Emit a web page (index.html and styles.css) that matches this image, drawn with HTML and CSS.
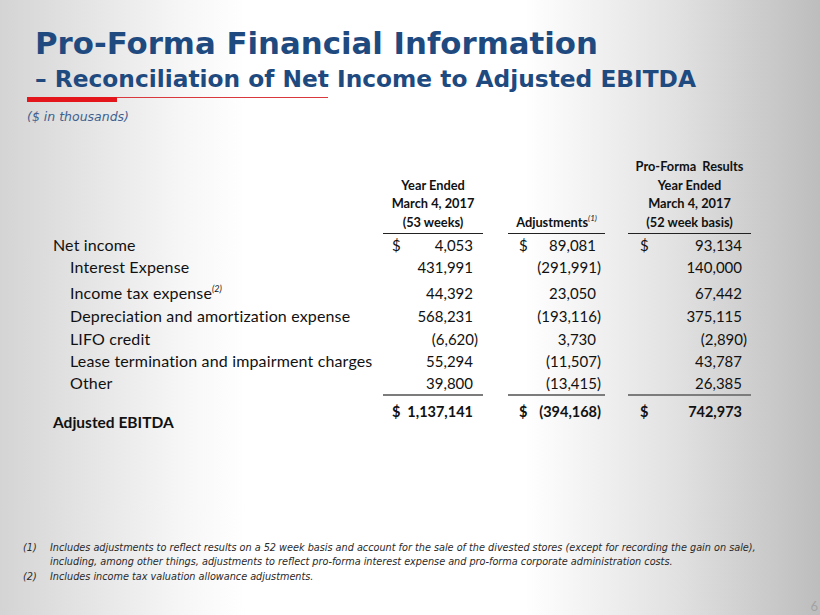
FILE: index.html
```html
<!DOCTYPE html>
<html>
<head>
<meta charset="utf-8">
<link rel="stylesheet" href="styles.css">
</head>
<body>
<div class="slide">
  <header class="head">
    <h1 class="title">Pro-Forma Financial Information</h1>
    <h2 class="subtitle">– Reconciliation of Net Income to Adjusted EBITDA</h2>
    <div class="rule"><span class="rule-thick"></span><span class="rule-thin"></span></div>
    <div class="units">($ in thousands)</div>
  </header>

  <main class="body">
    <table class="fin">
      <colgroup>
        <col class="c-label"><col class="c-v1"><col class="c-gap1"><col class="c-v2"><col class="c-gap2"><col class="c-v3">
      </colgroup>
      <thead>
        <tr class="hdr">
          <th></th>
          <th class="hv"><div>Year Ended</div><div>March 4, 2017</div><div>(53 weeks)</div></th>
          <th></th>
          <th class="hv"><div>Adjustments<sup class="hsup">(1)</sup></div></th>
          <th></th>
          <th class="hv"><div>Pro-Forma&nbsp; Results</div><div>Year Ended</div><div>March 4, 2017</div><div>(52 week basis)</div></th>
        </tr>
      </thead>
      <tbody>
        <tr class="r r1">
          <td class="lbl">Net income</td>
          <td class="v v1"><span class="cur">$</span><span class="n">4,053</span></td><td></td>
          <td class="v v2"><span class="cur">$</span><span class="n">89,081</span></td><td></td>
          <td class="v v3"><span class="cur">$</span><span class="n">93,134</span></td>
        </tr>
        <tr class="r r2">
          <td class="lbl ind">Interest Expense</td>
          <td class="v v1"><span class="n">431,991</span></td><td></td>
          <td class="v v2"><span class="n">(291,991<span class="rp">)</span></span></td><td></td>
          <td class="v v3"><span class="n">140,000</span></td>
        </tr>
        <tr class="r r3">
          <td class="lbl ind">Income tax expense<sup class="lsup">(2)</sup></td>
          <td class="v v1"><span class="n">44,392</span></td><td></td>
          <td class="v v2"><span class="n">23,050</span></td><td></td>
          <td class="v v3"><span class="n">67,442</span></td>
        </tr>
        <tr class="r r4">
          <td class="lbl ind">Depreciation and amortization expense</td>
          <td class="v v1"><span class="n">568,231</span></td><td></td>
          <td class="v v2"><span class="n">(193,116<span class="rp">)</span></span></td><td></td>
          <td class="v v3"><span class="n">375,115</span></td>
        </tr>
        <tr class="r r5">
          <td class="lbl ind">LIFO credit</td>
          <td class="v v1"><span class="n">(6,620<span class="rp">)</span></span></td><td></td>
          <td class="v v2"><span class="n">3,730</span></td><td></td>
          <td class="v v3"><span class="n">(2,890<span class="rp">)</span></span></td>
        </tr>
        <tr class="r r6">
          <td class="lbl ind">Lease termination and impairment charges</td>
          <td class="v v1"><span class="n">55,294</span></td><td></td>
          <td class="v v2"><span class="n">(11,507<span class="rp">)</span></span></td><td></td>
          <td class="v v3"><span class="n">43,787</span></td>
        </tr>
        <tr class="r r7">
          <td class="lbl ind">Other</td>
          <td class="v v1 sub"><span class="n">39,800</span></td><td></td>
          <td class="v v2 sub"><span class="n">(13,415<span class="rp">)</span></span></td><td></td>
          <td class="v v3 sub"><span class="n">26,385</span></td>
        </tr>
        <tr class="tot">
          <td class="lbl tlbl">Adjusted EBITDA</td>
          <td class="v v1 tv"><span class="cur">$</span><span class="n">1,137,141</span></td><td></td>
          <td class="v v2 tv"><span class="cur">$</span><span class="n">(394,168<span class="rp">)</span></span></td><td></td>
          <td class="v v3 tv"><span class="cur">$</span><span class="n">742,973</span></td>
        </tr>
      </tbody>
    </table>
  </main>

  <footer class="foot">
    <ol class="notes">
      <li><span class="mk">(1)</span><span class="nt">Includes adjustments to reflect results on a 52 week basis and account for the sale of the divested stores (except for recording the gain on sale), including, among other things, adjustments to reflect pro-forma interest expense and pro-forma corporate administration costs.</span></li>
      <li><span class="mk">(2)</span><span class="nt">Includes income tax valuation allowance adjustments.</span></li>
    </ol>
    <div class="pageno">6</div>
  </footer>
</div>
</body>
</html>
```

FILE: styles.css
```css
html, body {
  margin: 0;
  padding: 0;
}
body {
  width: 820px;
  height: 615px;
  overflow: hidden;
}
.slide {
  width: 820px;
  height: 615px;
  box-sizing: border-box;
  display: flex;
  flex-direction: column;
  background: linear-gradient(to right, #d4d4d4 0%, #f6f6f6 22%, #ffffff 30%, #ffffff 64%, #e2e2e2 82%, #bdbdbd 100%);
  font-family: Lato, "Liberation Sans", sans-serif;
  color: #111;
}

/* header */
.head {
  padding: 25px 0 0 27px;
}
.title {
  margin: 0 0 0 8px;
  font-family: "DejaVu Sans", Lato, sans-serif;
  font-weight: 700;
  font-size: 30.8px;
  line-height: 36px;
  color: #1f4a80;
}
.subtitle {
  margin: 3px 0 0 8px;
  font-family: "DejaVu Sans", Lato, sans-serif;
  font-weight: 700;
  font-size: 23.3px;
  line-height: 30px;
  color: #1f4a80;
}
.rule {
  display: flex;
  align-items: flex-start;
  margin-top: 3px;
  width: 301px;
}
.rule-thick {
  width: 90px;
  height: 5px;
  background: #e4151b;
}
.rule-thin {
  flex: 1;
  height: 1px;
  background: #d9393d;
}
.units {
  margin-top: 7px;
  font-family: "DejaVu Sans", sans-serif;
  font-style: oblique;
  font-size: 12.5px;
  line-height: 15px;
  color: #3f5f8f;
}

/* table */
.body {
  flex: 1;
  padding: 33px 0 0 53px;
}
.fin {
  border-collapse: collapse;
  table-layout: fixed;
  width: 698px;
}
.c-label { width: 330px; }
.c-v1 { width: 100px; }
.c-gap1 { width: 25px; }
.c-v2 { width: 97px; }
.c-gap2 { width: 23px; }
.c-v3 { width: 123px; }

.fin th, .fin td {
  padding: 0;
}
.hdr th {
  vertical-align: bottom;
  font-weight: 700;
  font-size: 12.8px;
  line-height: 18.6px;
  padding-bottom: 1.5px;
  color: #111;
}
.hv {
  text-align: center;
  border-bottom: 1px solid #222;
}
.hsup {
  font-style: italic;
  font-weight: 400;
  font-size: 8px;
  vertical-align: 6px;
  line-height: 0;
}
.r td {
  font-size: 15px;
  line-height: 22px;
  vertical-align: middle;
}
.r td.lbl {
  font-size: 16px;
  letter-spacing: 0.15px;
}
.r1 { height: 22px; }
.r2 { height: 23px; }
.r3 { height: 26px; }
.r3 td { padding-top: 3px; }
.r4 { height: 22.5px; }
.r5 { height: 22.5px; }
.r6 { height: 22px; }
.r7 { height: 22px; }
.lbl {
  white-space: nowrap;
}
.ind {
  padding-left: 17px !important;
}
.lsup {
  font-style: italic;
  font-size: 9px;
  vertical-align: 7px;
  line-height: 0;
  letter-spacing: 0;
}
.v {
  text-align: right;
  white-space: nowrap;
}
.v1 { padding-right: 10px !important; padding-left: 9px !important; }
.v2 { padding-right: 9px !important; padding-left: 11px !important; }
.v3 { padding-right: 9px !important; padding-left: 12px !important; }
.cur {
  float: left;
}
.rp {
  margin-right: -5px;
}
.sub {
  border-bottom: 2px solid #7c7c7c;
}
.tot td {
  font-weight: 700;
  font-size: 14.5px;
  line-height: 18px;
  vertical-align: top;
  padding-top: 7px;
}
.tot .tlbl {
  padding-top: 18px;
  font-size: 15.5px;
}

/* footer */
.foot {
  display: flex;
  align-items: flex-end;
  justify-content: space-between;
  padding: 0 2px 2px 23px;
}
.notes {
  list-style: none;
  margin: 0 0 29px 0;
  padding: 0;
  font-family: "DejaVu Sans", sans-serif;
  font-style: oblique;
  font-size: 9.7px;
  line-height: 14.5px;
  color: #2a2a2a;
}
.notes li {
  display: flex;
}
.mk {
  flex: none;
  width: 27px;
}
.nt {
  width: 730px;
}
.pageno {
  font-family: Lato, "DejaVu Sans", sans-serif;
  font-weight: 400;
  font-size: 13px;
  line-height: 13px;
  color: #a3a3a3;
}
```
